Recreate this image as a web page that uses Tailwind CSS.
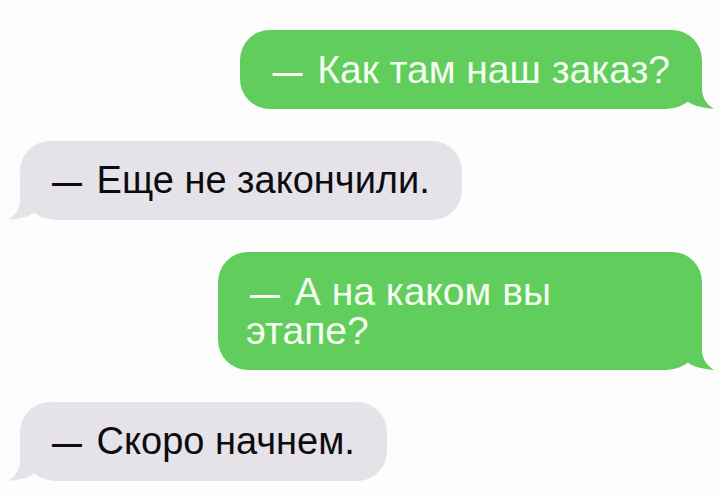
<!DOCTYPE html>
<html lang="ru">
<head>
    <meta charset="UTF-8">
    <meta name="viewport" content="width=device-width, initial-scale=1.0">
    <title>Сообщения</title>
    <script src="https://cdn.jsdelivr.net/npm/@tailwindcss/browser@4"></script>
</head>
<body class="bg-[#fdfdfd] font-['Liberation_Sans',Arial,sans-serif]">
    <main class="flex flex-col gap-8 pt-[30px] pb-4 pl-5 pr-[18px]">

        <div class="relative self-end max-w-[484px] rounded-[30px] rounded-br-[36px] bg-[#61cd5c] text-[#f4fff2] text-[39px] leading-[39px] pl-7 pr-8 py-5">
            <p><span class="text-[30px] leading-none font-bold px-1">—</span> Как там наш заказ?</p>
            <svg class="absolute bottom-0 -right-3 w-9 h-10 text-[#61cd5c]" viewBox="0 0 36 40" fill="currentColor" aria-hidden="true">
                <path d="M0 0H24V20C24 28 28 35 36 40C25 39 15 37 9 32L0 26Z"/>
            </svg>
        </div>

        <div class="relative self-start max-w-[484px] rounded-[30px] rounded-bl-[36px] bg-[#e5e3e8] text-[#0c0c10] text-[38px] leading-[39px] pl-7 pr-8 py-5">
            <p><span class="text-[30px] leading-none font-bold px-1">—</span> Еще не закончили.</p>
            <svg class="absolute bottom-0 -left-3 w-9 h-10 text-[#e5e3e8]" viewBox="0 0 36 40" fill="currentColor" aria-hidden="true">
                <path d="M36 0H12V20C12 28 8 35 0 40C11 39 21 37 27 32L36 26Z"/>
            </svg>
        </div>

        <div class="relative self-end w-full max-w-[484px] rounded-[30px] rounded-br-[36px] bg-[#61cd5c] text-[#f4fff2] text-[39px] leading-[39px] pl-7 pr-8 py-5">
            <p><span class="text-[30px] leading-none font-bold px-1">—</span> А на каком вы<br>этапе?</p>
            <svg class="absolute bottom-0 -right-3 w-9 h-10 text-[#61cd5c]" viewBox="0 0 36 40" fill="currentColor" aria-hidden="true">
                <path d="M0 0H24V20C24 28 28 35 36 40C25 39 15 37 9 32L0 26Z"/>
            </svg>
        </div>

        <div class="relative self-start max-w-[484px] rounded-[30px] rounded-bl-[36px] bg-[#e5e3e8] text-[#0c0c10] text-[38px] leading-[39px] pl-7 pr-8 py-5">
            <p><span class="text-[30px] leading-none font-bold px-1">—</span> Скоро начнем.</p>
            <svg class="absolute bottom-0 -left-3 w-9 h-10 text-[#e5e3e8]" viewBox="0 0 36 40" fill="currentColor" aria-hidden="true">
                <path d="M36 0H12V20C12 28 8 35 0 40C11 39 21 37 27 32L36 26Z"/>
            </svg>
        </div>

    </main>
</body>
</html>
